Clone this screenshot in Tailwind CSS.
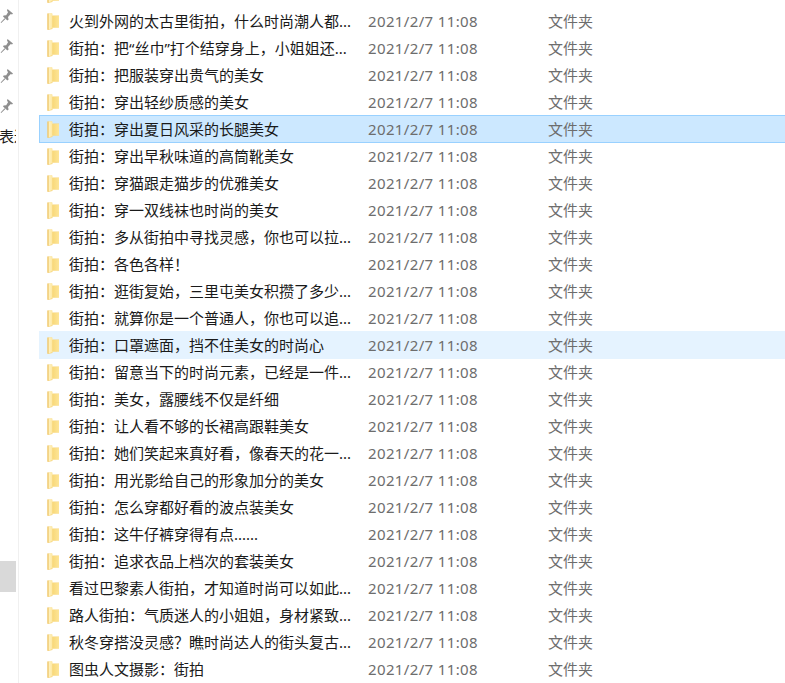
<!DOCTYPE html>
<html lang="zh">
<head>
<meta charset="utf-8">
<script src="https://cdn.jsdelivr.net/npm/@tailwindcss/browser@4"></script>
</head>
<body class="bg-white overflow-hidden">
<svg width="0" height="0" class="absolute">
  <defs>
    <linearGradient id="fg" x1="0" y1="0" x2="1" y2="0"><stop offset="0" stop-color="#fff3c4"/><stop offset="1" stop-color="#fde7a0"/></linearGradient>
    <linearGradient id="fr" x1="0" y1="0" x2="1" y2="0"><stop offset="0" stop-color="#f8d878"/><stop offset="1" stop-color="#fde597"/></linearGradient>
    <symbol id="folder" viewBox="0 0 13 17">
      <path d="M0.5 0.5 L5 0.5 L5 2.5 L12 2.5 L12 14.5 L5.5 14.5 L5.5 16 L1 17 L0.5 16 Z" fill="#f7d57d"/>
      <path d="M1.5 0.5 L5.5 0.5 L5.5 15 L1.5 16.5 Z" fill="url(#fg)"/>
      <path d="M5.5 3 L12 3 L12 14.5 L5.5 14.5 Z" fill="url(#fr)"/>
      <path d="M0.5 0.5 L1.5 0.5 L1.5 16.5 L0.5 17 Z" fill="#eec36b"/>
    </symbol>
    <symbol id="pin" viewBox="0 0 14 16">
      <path d="M7.5 1 L13 5.5 L12 6.6 L10.8 6 L8 9 L8.6 11.6 L7.4 12.4 L3 8.4 L3.6 7.4 L6.2 7.2 L8 4.2 L7 2.4 Z" fill="#8f8f8f"/>
      <path d="M4.6 10.2 L5.4 11 L1.2 15 L0.6 14.4 Z" fill="#8f8f8f"/>
    </symbol>
  </defs>
</svg>
<div class="flex h-[683px] w-[785px] overflow-hidden font-['Noto_Sans','Noto_Sans_CJK_SC',sans-serif] text-[15px]">
  <aside class="relative w-[19px] shrink-0 border-r border-[#f0f0f0] overflow-hidden">
    <div class="flex flex-col gap-[14px] pt-[8px]">
      <svg class="w-[14px] h-[16px]"><use href="#pin"/></svg>
      <svg class="w-[14px] h-[16px]"><use href="#pin"/></svg>
      <svg class="w-[14px] h-[16px]"><use href="#pin"/></svg>
      <svg class="w-[14px] h-[16px]"><use href="#pin"/></svg>
    </div>
    <div class="mt-[12px] w-[16px] overflow-hidden"><p class="-ml-[1px] w-[30px] text-[15px] leading-5 text-[#1a1a1a] font-['Noto_Sans_CJK_SC',sans-serif]">表达</p></div>
    <div class="absolute left-0 top-[561px] w-4 h-[31px] bg-[#d9d9d9]"></div>
  </aside>
  <main class="w-[790px] shrink-0 -mt-[19px] pl-5 text-[#1a1a1a]">
    <div class="flex h-[27px] items-center pl-[8px]"><svg class="w-[13px] h-[17px]"><use href="#folder"/></svg></div>

    <div class="flex h-[27px] items-center pl-[8px]"><svg class="w-[13px] h-[17px] shrink-0"><use href="#folder"/></svg><span class="ml-[9px] w-[299px] whitespace-nowrap">火到外网的太古里街拍，什么时尚潮人都...</span><span class="w-[180px] tracking-[0.36px] text-[#6d6d6d]">2021/2/7 11:08</span><span class="text-[#6d6d6d]">文件夹</span></div>
    <div class="flex h-[27px] items-center pl-[8px]"><svg class="w-[13px] h-[17px] shrink-0"><use href="#folder"/></svg><span class="ml-[9px] w-[299px] whitespace-nowrap">街拍：把“丝巾”打个结穿身上，小姐姐还...</span><span class="w-[180px] tracking-[0.36px] text-[#6d6d6d]">2021/2/7 11:08</span><span class="text-[#6d6d6d]">文件夹</span></div>
    <div class="flex h-[27px] items-center pl-[8px]"><svg class="w-[13px] h-[17px] shrink-0"><use href="#folder"/></svg><span class="ml-[9px] w-[299px] whitespace-nowrap">街拍：把服装穿出贵气的美女</span><span class="w-[180px] tracking-[0.36px] text-[#6d6d6d]">2021/2/7 11:08</span><span class="text-[#6d6d6d]">文件夹</span></div>
    <div class="flex h-[27px] items-center pl-[8px]"><svg class="w-[13px] h-[17px] shrink-0"><use href="#folder"/></svg><span class="ml-[9px] w-[299px] whitespace-nowrap">街拍：穿出轻纱质感的美女</span><span class="w-[180px] tracking-[0.36px] text-[#6d6d6d]">2021/2/7 11:08</span><span class="text-[#6d6d6d]">文件夹</span></div>
    <div class="flex h-[28px] -mt-[1px] items-center pl-[7px] border border-[#99d1ff] bg-[#cce8ff]"><svg class="w-[13px] h-[17px] shrink-0"><use href="#folder"/></svg><span class="ml-[9px] w-[299px] whitespace-nowrap">街拍：穿出夏日风采的长腿美女</span><span class="w-[180px] tracking-[0.36px] text-[#6d6d6d]">2021/2/7 11:08</span><span class="text-[#6d6d6d]">文件夹</span></div>
    <div class="flex h-[27px] items-center pl-[8px]"><svg class="w-[13px] h-[17px] shrink-0"><use href="#folder"/></svg><span class="ml-[9px] w-[299px] whitespace-nowrap">街拍：穿出早秋味道的高筒靴美女</span><span class="w-[180px] tracking-[0.36px] text-[#6d6d6d]">2021/2/7 11:08</span><span class="text-[#6d6d6d]">文件夹</span></div>
    <div class="flex h-[27px] items-center pl-[8px]"><svg class="w-[13px] h-[17px] shrink-0"><use href="#folder"/></svg><span class="ml-[9px] w-[299px] whitespace-nowrap">街拍：穿猫跟走猫步的优雅美女</span><span class="w-[180px] tracking-[0.36px] text-[#6d6d6d]">2021/2/7 11:08</span><span class="text-[#6d6d6d]">文件夹</span></div>
    <div class="flex h-[27px] items-center pl-[8px]"><svg class="w-[13px] h-[17px] shrink-0"><use href="#folder"/></svg><span class="ml-[9px] w-[299px] whitespace-nowrap">街拍：穿一双线袜也时尚的美女</span><span class="w-[180px] tracking-[0.36px] text-[#6d6d6d]">2021/2/7 11:08</span><span class="text-[#6d6d6d]">文件夹</span></div>
    <div class="flex h-[27px] items-center pl-[8px]"><svg class="w-[13px] h-[17px] shrink-0"><use href="#folder"/></svg><span class="ml-[9px] w-[299px] whitespace-nowrap">街拍：多从街拍中寻找灵感，你也可以拉...</span><span class="w-[180px] tracking-[0.36px] text-[#6d6d6d]">2021/2/7 11:08</span><span class="text-[#6d6d6d]">文件夹</span></div>
    <div class="flex h-[27px] items-center pl-[8px]"><svg class="w-[13px] h-[17px] shrink-0"><use href="#folder"/></svg><span class="ml-[9px] w-[299px] whitespace-nowrap">街拍：各色各样！</span><span class="w-[180px] tracking-[0.36px] text-[#6d6d6d]">2021/2/7 11:08</span><span class="text-[#6d6d6d]">文件夹</span></div>
    <div class="flex h-[27px] items-center pl-[8px]"><svg class="w-[13px] h-[17px] shrink-0"><use href="#folder"/></svg><span class="ml-[9px] w-[299px] whitespace-nowrap">街拍：逛街复始，三里屯美女积攒了多少...</span><span class="w-[180px] tracking-[0.36px] text-[#6d6d6d]">2021/2/7 11:08</span><span class="text-[#6d6d6d]">文件夹</span></div>
    <div class="flex h-[27px] items-center pl-[8px]"><svg class="w-[13px] h-[17px] shrink-0"><use href="#folder"/></svg><span class="ml-[9px] w-[299px] whitespace-nowrap">街拍：就算你是一个普通人，你也可以追...</span><span class="w-[180px] tracking-[0.36px] text-[#6d6d6d]">2021/2/7 11:08</span><span class="text-[#6d6d6d]">文件夹</span></div>
    <div class="flex h-[28px] -mt-[1px] items-center pl-[8px] bg-[#e5f3ff]"><svg class="w-[13px] h-[17px] shrink-0"><use href="#folder"/></svg><span class="ml-[9px] w-[299px] whitespace-nowrap">街拍：口罩遮面，挡不住美女的时尚心</span><span class="w-[180px] tracking-[0.36px] text-[#6d6d6d]">2021/2/7 11:08</span><span class="text-[#6d6d6d]">文件夹</span></div>
    <div class="flex h-[27px] items-center pl-[8px]"><svg class="w-[13px] h-[17px] shrink-0"><use href="#folder"/></svg><span class="ml-[9px] w-[299px] whitespace-nowrap">街拍：留意当下的时尚元素，已经是一件...</span><span class="w-[180px] tracking-[0.36px] text-[#6d6d6d]">2021/2/7 11:08</span><span class="text-[#6d6d6d]">文件夹</span></div>
    <div class="flex h-[27px] items-center pl-[8px]"><svg class="w-[13px] h-[17px] shrink-0"><use href="#folder"/></svg><span class="ml-[9px] w-[299px] whitespace-nowrap">街拍：美女，露腰线不仅是纤细</span><span class="w-[180px] tracking-[0.36px] text-[#6d6d6d]">2021/2/7 11:08</span><span class="text-[#6d6d6d]">文件夹</span></div>
    <div class="flex h-[27px] items-center pl-[8px]"><svg class="w-[13px] h-[17px] shrink-0"><use href="#folder"/></svg><span class="ml-[9px] w-[299px] whitespace-nowrap">街拍：让人看不够的长裙高跟鞋美女</span><span class="w-[180px] tracking-[0.36px] text-[#6d6d6d]">2021/2/7 11:08</span><span class="text-[#6d6d6d]">文件夹</span></div>
    <div class="flex h-[27px] items-center pl-[8px]"><svg class="w-[13px] h-[17px] shrink-0"><use href="#folder"/></svg><span class="ml-[9px] w-[299px] whitespace-nowrap">街拍：她们笑起来真好看，像春天的花一...</span><span class="w-[180px] tracking-[0.36px] text-[#6d6d6d]">2021/2/7 11:08</span><span class="text-[#6d6d6d]">文件夹</span></div>
    <div class="flex h-[27px] items-center pl-[8px]"><svg class="w-[13px] h-[17px] shrink-0"><use href="#folder"/></svg><span class="ml-[9px] w-[299px] whitespace-nowrap">街拍：用光影给自己的形象加分的美女</span><span class="w-[180px] tracking-[0.36px] text-[#6d6d6d]">2021/2/7 11:08</span><span class="text-[#6d6d6d]">文件夹</span></div>
    <div class="flex h-[27px] items-center pl-[8px]"><svg class="w-[13px] h-[17px] shrink-0"><use href="#folder"/></svg><span class="ml-[9px] w-[299px] whitespace-nowrap">街拍：怎么穿都好看的波点装美女</span><span class="w-[180px] tracking-[0.36px] text-[#6d6d6d]">2021/2/7 11:08</span><span class="text-[#6d6d6d]">文件夹</span></div>
    <div class="flex h-[27px] items-center pl-[8px]"><svg class="w-[13px] h-[17px] shrink-0"><use href="#folder"/></svg><span class="ml-[9px] w-[299px] whitespace-nowrap">街拍：这牛仔裤穿得有点......</span><span class="w-[180px] tracking-[0.36px] text-[#6d6d6d]">2021/2/7 11:08</span><span class="text-[#6d6d6d]">文件夹</span></div>
    <div class="flex h-[27px] items-center pl-[8px]"><svg class="w-[13px] h-[17px] shrink-0"><use href="#folder"/></svg><span class="ml-[9px] w-[299px] whitespace-nowrap">街拍：追求衣品上档次的套装美女</span><span class="w-[180px] tracking-[0.36px] text-[#6d6d6d]">2021/2/7 11:08</span><span class="text-[#6d6d6d]">文件夹</span></div>
    <div class="flex h-[27px] items-center pl-[8px]"><svg class="w-[13px] h-[17px] shrink-0"><use href="#folder"/></svg><span class="ml-[9px] w-[299px] whitespace-nowrap">看过巴黎素人街拍，才知道时尚可以如此...</span><span class="w-[180px] tracking-[0.36px] text-[#6d6d6d]">2021/2/7 11:08</span><span class="text-[#6d6d6d]">文件夹</span></div>
    <div class="flex h-[27px] items-center pl-[8px]"><svg class="w-[13px] h-[17px] shrink-0"><use href="#folder"/></svg><span class="ml-[9px] w-[299px] whitespace-nowrap">路人街拍：气质迷人的小姐姐，身材紧致...</span><span class="w-[180px] tracking-[0.36px] text-[#6d6d6d]">2021/2/7 11:08</span><span class="text-[#6d6d6d]">文件夹</span></div>
    <div class="flex h-[27px] items-center pl-[8px]"><svg class="w-[13px] h-[17px] shrink-0"><use href="#folder"/></svg><span class="ml-[9px] w-[299px] whitespace-nowrap">秋冬穿搭没灵感？瞧时尚达人的街头复古...</span><span class="w-[180px] tracking-[0.36px] text-[#6d6d6d]">2021/2/7 11:08</span><span class="text-[#6d6d6d]">文件夹</span></div>
    <div class="flex h-[27px] items-center pl-[8px]"><svg class="w-[13px] h-[17px] shrink-0"><use href="#folder"/></svg><span class="ml-[9px] w-[299px] whitespace-nowrap">图虫人文摄影：街拍</span><span class="w-[180px] tracking-[0.36px] text-[#6d6d6d]">2021/2/7 11:08</span><span class="text-[#6d6d6d]">文件夹</span></div>
  </main>
</div>
</body>
</html>
